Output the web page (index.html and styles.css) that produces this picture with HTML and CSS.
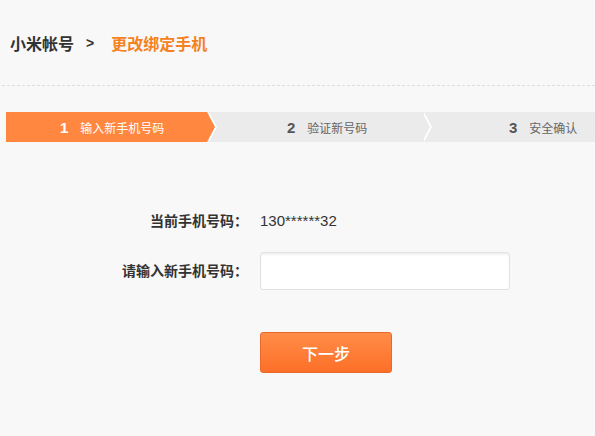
FILE: index.html
```html
<!DOCTYPE html>
<html lang="zh-CN">
<head>
  <meta charset="UTF-8" />
  <meta name="viewport" content="width=device-width, initial-scale=1" />
  <title>更改绑定手机 - 小米帐号</title>
  <link rel="stylesheet" href="styles.css">
</head>
<body>
  <div class="crumb">
    <span class="crumb-home">小米帐号</span>
    <span class="crumb-sep">&gt;</span>
    <span class="crumb-current">更改绑定手机</span>
  </div>

  <div class="steps">
    <div class="step step-1 active">
      <span class="step-num">1</span>
      <span class="step-text">输入新手机号码</span>
    </div>
    <div class="step step-2">
      <span class="step-num">2</span>
      <span class="step-text">验证新号码</span>
    </div>
    <div class="step step-3">
      <span class="step-num">3</span>
      <span class="step-text">安全确认</span>
    </div>
  </div>

  <form class="phone-form" onsubmit="return false;">
    <div class="form-row">
      <label class="form-label">当前手机号码：</label>
      <span class="form-value">130******32</span>
    </div>
    <div class="form-row">
      <label class="form-label" for="new-phone">请输入新手机号码：</label>
      <input type="text" id="new-phone" class="form-input" />
    </div>
    <div class="form-row form-actions">
      <button type="submit" class="btn-next">下一步</button>
    </div>
  </form>
</body>
</html>
```

FILE: styles.css
```css
body {
  margin: 0;
  background: #f8f8f8;
  color: #333;
  font-family: "Liberation Sans", "Noto Sans CJK SC", sans-serif;
}
.crumb {
  display: flex;
  align-items: center;
  height: 20px;
  padding: 33px 10px 32px 8px;
  margin: 0 0 0 2px;
  font-size: 16px;
  font-weight: bold;
  border-bottom: 1px dashed #dedede;
}
.crumb-home {
  color: #333;
}
.crumb-sep {
  margin: 0 17px 0 12px;
  font-size: 14px;
  color: #333;
}
.crumb-current {
  color: #f5821f;
}

/* step bar */
.steps {
  display: flex;
  height: 30px;
  margin: 26px 0 0 6px;
  background: #ebebeb;
  overflow: hidden;
}
.step {
  position: relative;
  display: flex;
  align-items: center;
  height: 30px;
  box-sizing: border-box;
  color: #666;
  font-size: 12px;
}
.step-1 {
  width: 201px;
  padding-left: 54px;
}
.step-2 {
  width: 215px;
  padding-left: 80px;
}
.step-3 {
  flex: 1;
  padding-left: 87px;
}
.step.active {
  background: #ff8740;
  color: #fff;
}
.step-num {
  font-size: 15px;
  font-weight: bold;
  color: #555;
  margin-right: 12px;
}
.active .step-num {
  color: #fff;
}
/* chevron: white edge behind, coloured tip in front */
.step-1::before,
.step-2::before,
.step-1::after,
.step-2::after {
  content: "";
  position: absolute;
  top: 0;
  border-top: 15px solid transparent;
  border-bottom: 15px solid transparent;
  z-index: 1;
}
.step-1::before,
.step-2::before {
  right: -10px;
  border-left: 8px solid #fff;
}
.step-1::after,
.step-2::after {
  right: -8px;
  z-index: 2;
}
.step-1::after {
  border-left: 8px solid #ff8740;
}
.step-2::after {
  border-left: 8px solid #ebebeb;
}

/* form */
.phone-form {
  margin-top: 69px;
}
.form-row {
  display: flex;
  align-items: center;
  margin-bottom: 21px;
}
.form-label {
  width: 248px;
  text-align: right;
  font-size: 14px;
  font-weight: bold;
  color: #333;
  line-height: 20px;
}
.form-value {
  margin-left: 12px;
  font-size: 15px;
  line-height: 20px;
  color: #333;
}
.form-input {
  margin-left: 12px;
  width: 250px;
  height: 38px;
  box-sizing: border-box;
  border: 1px solid #e2e2e2;
  border-radius: 3px;
  background: #fff;
  box-shadow: inset 0 2px 2px rgba(0, 0, 0, 0.06);
  padding: 0 10px;
  font-size: 14px;
  outline: none;
}
.form-actions {
  margin-top: 42px;
  padding-left: 260px;
}
.btn-next {
  width: 132px;
  height: 41px;
  border: 1px solid #e8692a;
  border-radius: 3px;
  background: linear-gradient(#ff8d48, #fd6f28);
  color: #fff;
  font-family: "Noto Sans CJK SC", sans-serif;
  font-size: 16px;
  font-weight: 500;
  cursor: pointer;
}
```
